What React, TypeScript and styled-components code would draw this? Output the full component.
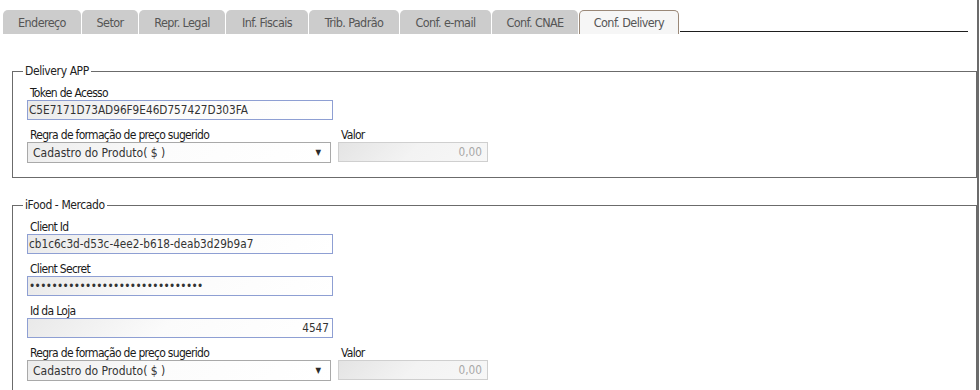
import { createGlobalStyle, styled } from 'styled-components';

const GlobalStyle = createGlobalStyle`
  body {
    margin: 0;
    background: #fff;
    font-family: 'DejaVu Sans Condensed', 'DejaVu Sans', sans-serif;
  }
`;

const Page = styled.div`
  box-sizing: border-box;
  width: 979px;
  min-height: 390px;
  border-right: 2px solid #6b6b6b;
`;

const TabBar = styled.div`
  display: flex;
  align-items: flex-end;
  gap: 1px;
  padding: 10px 9px 0 3px;
  height: 34px;
  box-sizing: border-box;
`;

const Tab = styled.div<{ $w: number; $active?: boolean }>`
  box-sizing: border-box;
  width: ${(p) => p.$w}px;
  height: 24px;
  display: flex;
  align-items: center;
  justify-content: center;
  font-size: 12.5px;
  letter-spacing: -0.6px;
  color: #555;
  border-radius: 5px 5px 0 0;
  background: ${(p) => (p.$active ? '#f6f6f6' : '#cccccc')};
  border: ${(p) => (p.$active ? '1px solid #9a8878' : 'none')};
  border-bottom: none;
  padding-bottom: ${(p) => (p.$active ? '1px' : '0')};
`;

const TabLine = styled.div`
  flex: 1;
  height: 1px;
  margin-bottom: 2px;
  background: #1e1e1e;
`;

const Content = styled.div`
  display: flex;
  flex-direction: column;
  gap: 20px;
  padding: 30px 0 0 12px;
`;

const Group = styled.fieldset`
  margin: 0;
  padding: 8px 0 14px 10px;
  border: 1px solid #6b6b6b;
  display: flex;
  flex-direction: column;
  gap: 8px;
`;

const Legend = styled.legend`
  padding: 0 2px;
  font-size: 12px;
  letter-spacing: -0.4px;
  line-height: 14px;
  color: #222;
`;

const Row = styled.div`
  display: flex;
  gap: 7px;
  margin-left: 4px;
`;

const Field = styled.div`
  display: flex;
  flex-direction: column;
`;

const Label = styled.label`
  font-size: 12px;
  letter-spacing: -0.7px;
  line-height: 14px;
  color: #1a1a1a;
  padding-left: 3px;
`;

const TextInput = styled.input<{ $w: number; $right?: boolean }>`
  box-sizing: border-box;
  width: ${(p) => p.$w}px;
  height: 20px;
  margin: 0;
  padding: 0 3px 0 1px;
  border: 1px solid #8e9fd3;
  background: linear-gradient(135deg, #e9e9e9, #fbfbfb 45%, #ffffff);
  font-family: 'DejaVu Sans Condensed', 'DejaVu Sans', sans-serif;
  font-size: 11.7px;
  color: #333;
  text-align: ${(p) => (p.$right ? 'right' : 'left')};
  outline: none;

  &[type='password'] {
    letter-spacing: -0.6px;
  }
`;

const ValueInput = styled(TextInput)`
  border-color: #cfcfcf;
  color: #a8a8a8;
  padding-right: 5px;
  background: linear-gradient(135deg, #e4e4e4, #f3f3f3 50%, #f7f7f7);
`;

const SelectBox = styled.div`
  box-sizing: border-box;
  width: 304px;
  height: 21px;
  display: flex;
  align-items: center;
  justify-content: space-between;
  padding: 0 9px 0 5px;
  border: 1px solid #a9a9a9;
  background: linear-gradient(135deg, #ececec, #fcfcfc 45%, #ffffff);
  font-family: 'DejaVu Sans Condensed', 'DejaVu Sans', sans-serif;
  font-size: 12px;
  color: #333;
`;

const Arrow = styled.span`
  font-size: 8px;
  color: #2a2a2a;
`;

const tabs = [
  { label: 'Endereço', w: 78 },
  { label: 'Setor', w: 56 },
  { label: 'Repr. Legal', w: 86 },
  { label: 'Inf. Fiscais', w: 82 },
  { label: 'Trib. Padrão', w: 90 },
  { label: 'Conf. e-mail', w: 91 },
  { label: 'Conf. CNAE', w: 86 },
  { label: 'Conf. Delivery', w: 100, active: true },
];

function PriceRow() {
  return (
    <Row>
      <Field>
        <Label>Regra de formação de preço sugerido</Label>
        <SelectBox>
          <span>Cadastro do Produto( $ )</span>
          <Arrow>▼</Arrow>
        </SelectBox>
      </Field>
      <Field>
        <Label>Valor</Label>
        <ValueInput $w={150} $right disabled value='0,00' readOnly />
      </Field>
    </Row>
  );
}

export default function App() {
  return (
    <Page>
      <GlobalStyle />
      <TabBar>
        {tabs.map((t) => (
          <Tab key={t.label} $w={t.w} $active={t.active}>
            {t.label}
          </Tab>
        ))}
        <TabLine />
      </TabBar>
      <Content>
        <Group>
          <Legend>Delivery APP</Legend>
          <Row>
            <Field>
              <Label>Token de Acesso</Label>
              <TextInput $w={306} value='C5E7171D73AD96F9E46D757427D303FA' readOnly />
            </Field>
          </Row>
          <PriceRow />
        </Group>
        <Group>
          <Legend>iFood - Mercado</Legend>
          <Row>
            <Field>
              <Label>Client Id</Label>
              <TextInput $w={306} value='cb1c6c3d-d53c-4ee2-b618-deab3d29b9a7' readOnly />
            </Field>
          </Row>
          <Row>
            <Field>
              <Label>Client Secret</Label>
              <TextInput $w={306} type='password' value='abcdefghijklmnopqrstuvwxyz12345' readOnly />
            </Field>
          </Row>
          <Row>
            <Field>
              <Label>Id da Loja</Label>
              <TextInput $w={306} $right value='4547' readOnly />
            </Field>
          </Row>
          <PriceRow />
        </Group>
      </Content>
    </Page>
  );
}
